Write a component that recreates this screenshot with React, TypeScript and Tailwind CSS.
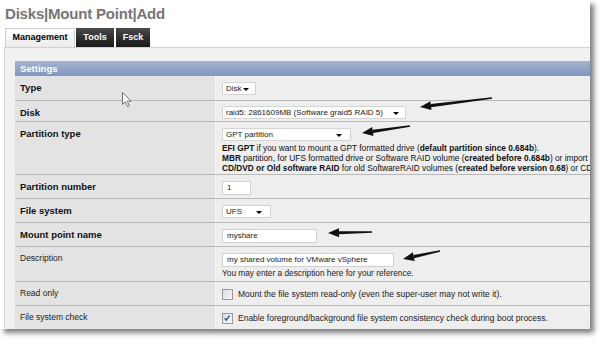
import React from "react";

const F = "font-['Liberation_Sans',Arial,sans-serif]";

function Select({ text, w, arrowRight = 8 }: { text: string; w: number; arrowRight?: number }) {
  return (
    <div
      className="relative h-[13px] bg-white border border-[#d4d4d4] text-[8px] leading-[11px] pl-[3px] text-[#222] whitespace-nowrap"
      style={{ width: w }}
    >
      {text}
      <span
        className="absolute top-[5px] w-0 h-0 border-l-[3px] border-r-[3px] border-t-[3px] border-l-transparent border-r-transparent border-t-black"
        style={{ right: arrowRight }}
      />
    </div>
  );
}

function Input({ text, w }: { text: string; w: number }) {
  return (
    <div
      className="h-[14px] bg-white border border-[#d0d0d0] text-[8px] leading-[12px] pl-[4px] text-[#222] whitespace-nowrap"
      style={{ width: w }}
    >
      {text}
    </div>
  );
}

function Check({ checked }: { checked?: boolean }) {
  return (
    <div className="w-[11px] h-[11px] border border-[#9a9a9a] bg-gradient-to-br from-[#dcdcdc] to-[#f8f8f8] relative shrink-0">
      {checked && (
        <svg viewBox="0 0 11 11" className="absolute inset-0 w-[9px] h-[9px]">
          <path d="M2 5 L4 7.5 L8 2" fill="none" stroke="#2a4d9a" strokeWidth="1.6" />
        </svg>
      )}
    </div>
  );
}

function Row({
  label,
  bold,
  h,
  children,
}: {
  label: string;
  bold?: boolean;
  h: string;
  children: React.ReactNode;
}) {
  return (
    <div className={`flex border-t border-[#b9b9b9] ${h}`}>
      <div
        className={`w-[200px] shrink-0 bg-[#e3e3e3] pl-[5px] pt-[6px] leading-[11px] ${
          bold ? "font-bold text-[9.5px] text-[#111]" : "text-[8.5px] text-[#222]"
        }`}
      >
        {label}
      </div>
      <div className="flex-1 bg-[#eeeeee] border-l border-[#f6f6f6] pl-[6px] pt-[6px]">{children}</div>
    </div>
  );
}

function Arrow({ x1, y1, x2, y2 }: { x1: number; y1: number; x2: number; y2: number }) {
  const dx = x2 - x1;
  const dy = y2 - y1;
  const L = Math.hypot(dx, dy);
  const ux = dx / L;
  const uy = dy / L;
  const nx = -uy;
  const ny = ux;
  const hl = 11;
  const bx = x2 - ux * hl;
  const by = y2 - uy * hl;
  const p = (x: number, y: number) => `${x.toFixed(1)},${y.toFixed(1)}`;
  const body = [
    p(x1 + nx * 0.7, y1 + ny * 0.7),
    p(bx + nx * 1.6, by + ny * 1.6),
    p(bx - nx * 1.6, by - ny * 1.6),
    p(x1 - nx * 0.7, y1 - ny * 0.7),
  ].join(" ");
  const head = [p(bx + nx * 4.5, by + ny * 4.5), p(x2, y2), p(bx - nx * 4.5, by - ny * 4.5)].join(" ");
  return (
    <g fill="#111">
      <polygon points={body} />
      <polygon points={head} />
    </g>
  );
}

export default function App() {
  return (
    <div className={`relative w-[605px] h-[345px] bg-white overflow-hidden ${F}`}>
      <div className="w-[590px] h-[329px] bg-white shadow-[4px_4px_5px_rgba(0,0,0,0.5)] overflow-hidden flex flex-col">
        <div className="pl-[5px] pt-[5px] h-[30px] text-[15px] font-bold text-[#767676] leading-[18px] tracking-[-0.2px]">
          Disks|Mount Point|Add
        </div>
        <div className="flex items-end h-[19px] pl-[5px] gap-[1px]">
          <div className="w-[70px] h-[19px] bg-gradient-to-b from-[#ffffff] to-[#ececec] border border-b-0 border-[#cfcfcf] text-[9px] font-bold text-black flex items-center justify-center">
            Management
          </div>
          <div className="w-[38px] h-[19px] bg-gradient-to-b from-[#4a4a4a] to-[#1a1a1a] text-[9px] font-bold text-white flex items-center justify-center">
            Tools
          </div>
          <div className="w-[34px] h-[19px] ml-[1px] bg-gradient-to-b from-[#4a4a4a] to-[#1a1a1a] text-[9px] font-bold text-white flex items-center justify-center">
            Fsck
          </div>
        </div>
        <div className="flex-1 ml-[4px] border-l border-t border-[#d2d2d2] bg-[#f1f1f1] pt-[13px] pl-[10px]">
          <div className="w-[700px]">
            <div className="h-[15px] bg-gradient-to-b from-[#a3b3d0] to-[#8197be] text-white font-bold text-[9.5px] leading-[15px] pl-[5px]">
              Settings
            </div>
            <div className="flex h-[24px]">
              <div className="w-[200px] shrink-0 bg-[#e3e3e3] pl-[5px] pt-[6px] leading-[11px] font-bold text-[9.5px] text-[#111]">
                Type
              </div>
              <div className="flex-1 bg-[#eeeeee] border-l border-[#f6f6f6] pl-[6px] pt-[6px]">
                <Select text="Disk" w={34} arrowRight={6} />
              </div>
            </div>
            <Row label="Disk" bold h="h-[21px]">
              <div className="-mt-[1px]">
                <Select text="raid5: 2861609MB (Software graid5 RAID 5)" w={184} arrowRight={6} />
              </div>
            </Row>
            <Row label="Partition type" bold h="h-[53px]">
              <Select text="GPT partition" w={129} arrowRight={8} />
              <div className="mt-[2px] text-[8.3px] leading-[10px] text-[#111] whitespace-nowrap">
                <div>
                  <b>EFI GPT</b> if you want to mount a GPT formatted drive (<b>default partition since 0.684b</b>).
                </div>
                <div>
                  <b>MBR</b> partition, for UFS formatted drive or Software RAID volume (<b>created before 0.684b</b>) or import disks from other OS.
                </div>
                <div>
                  <b>CD/DVD or Old software RAID</b> for old SoftwareRAID volumes (<b>created before version 0.68</b>) or CD/DVD.
                </div>
              </div>
            </Row>
            <Row label="Partition number" bold h="h-[24px]">
              <Input text="1" w={29} />
            </Row>
            <Row label="File system" bold h="h-[24px]">
              <Select text="UFS" w={49} arrowRight={8} />
            </Row>
            <Row label="Mount point name" bold h="h-[24px]">
              <Input text="myshare" w={95} />
            </Row>
            <Row label="Description" h="h-[35px]">
              <Input text="my shared volume for VMware vSphere" w={172} />
              <div className="text-[8.3px] leading-[11px] text-[#222] mt-[1px] whitespace-nowrap">
                You may enter a description here for your reference.
              </div>
            </Row>
            <Row label="Read only" h="h-[24px]">
              <div className="flex items-center gap-[5px] text-[8.5px] text-[#222] whitespace-nowrap">
                <Check />
                <span>Mount the file system read-only (even the super-user may not write it).</span>
              </div>
            </Row>
            <Row label="File system check" h="h-[24px]">
              <div className="flex items-center gap-[5px] text-[8.5px] text-[#222] whitespace-nowrap">
                <Check checked />
                <span>Enable foreground/background file system consistency check during boot process.</span>
              </div>
            </Row>
          </div>
        </div>
      </div>

      <svg className="absolute left-0 top-0 pointer-events-none" width="605" height="345" viewBox="0 0 605 345">
        <Arrow x1={492} y1={98} x2={420} y2={107} />
        <Arrow x1={410} y1={126} x2={362} y2={133} />
        <Arrow x1={372} y1={232} x2={328} y2={233} />
        <Arrow x1={440} y1={251} x2={403} y2={259} />
        <path
          d="M122.5 92.5 L122.5 104.5 L125.3 101.8 L127.5 106.5 L129.3 105.7 L127.2 101.2 L131 101.2 Z"
          fill="#fff"
          stroke="#555"
          strokeWidth="0.8"
          strokeLinejoin="round"
        />
      </svg>
    </div>
  );
}
